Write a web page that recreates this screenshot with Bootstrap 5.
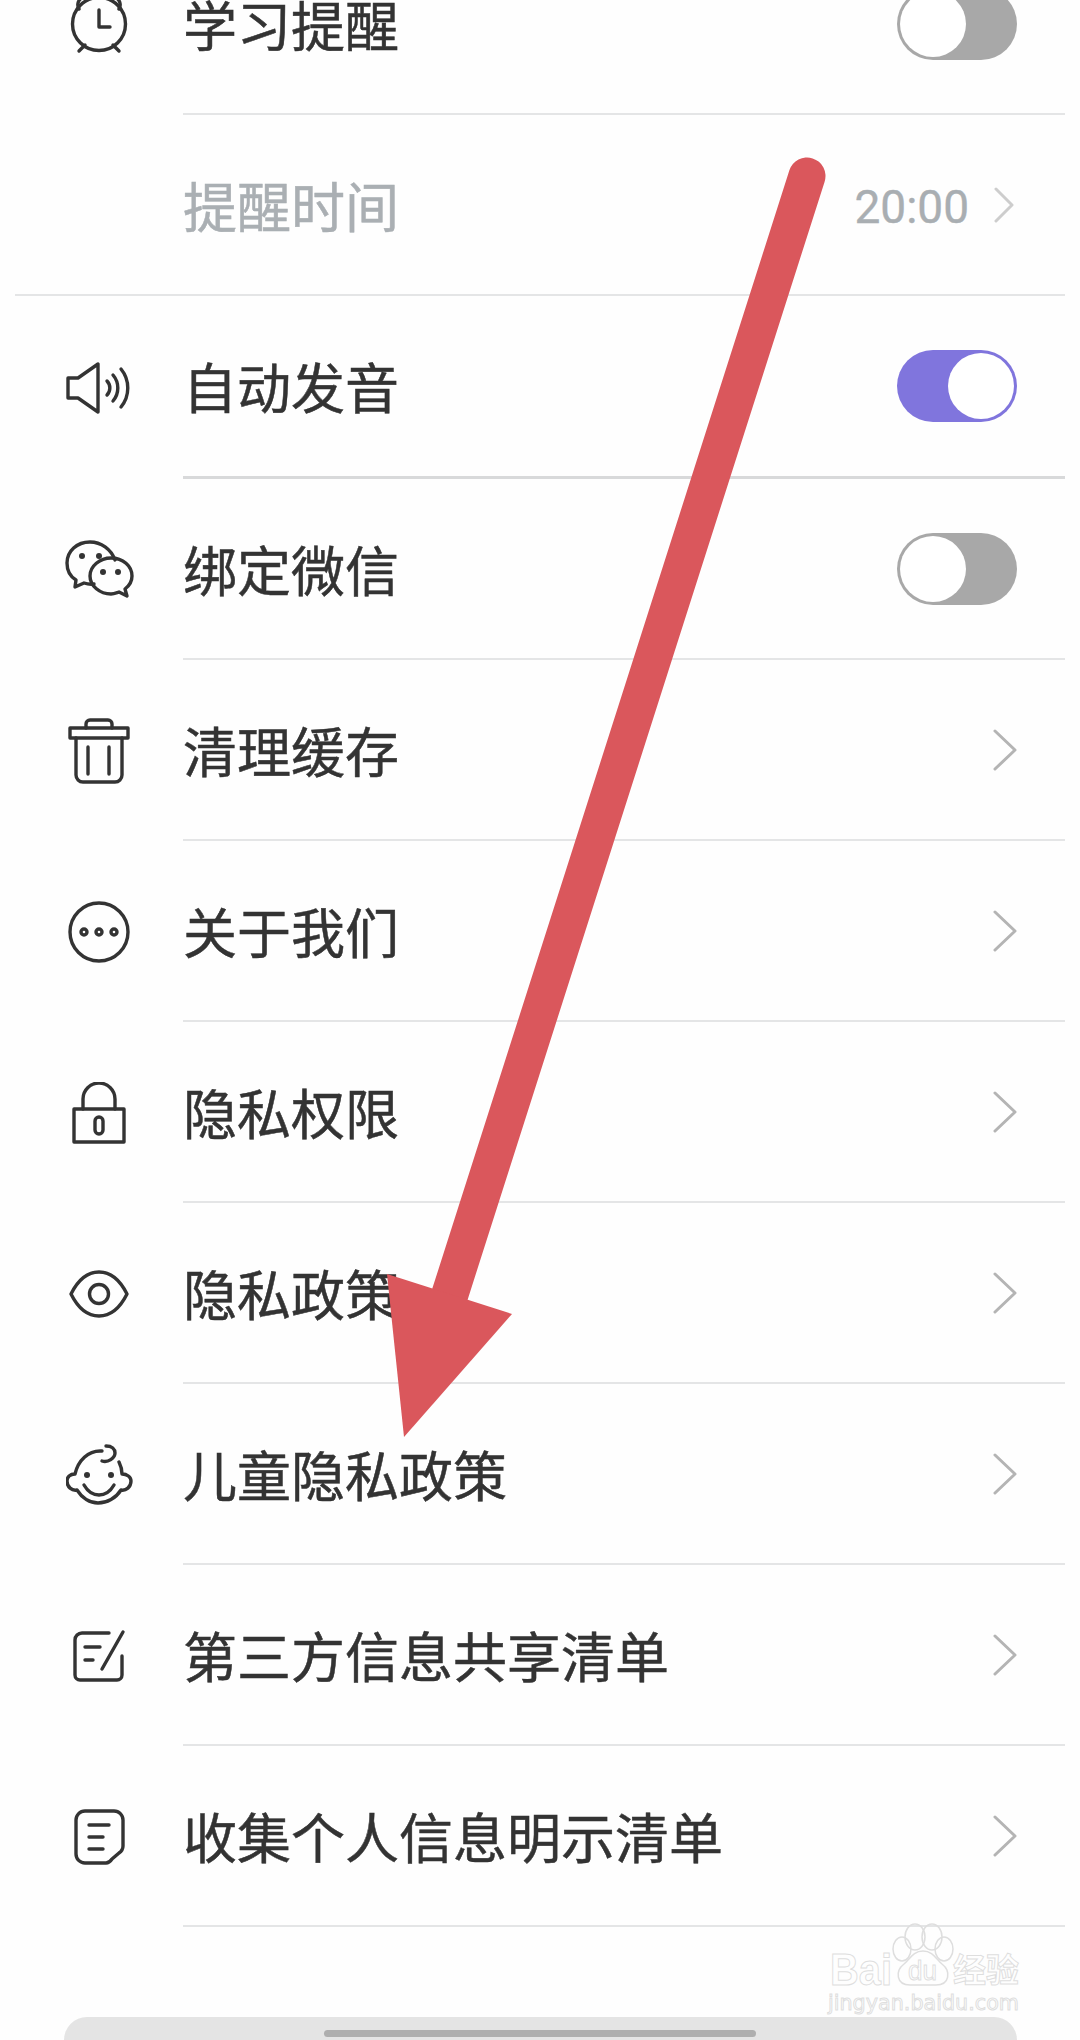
<!DOCTYPE html>
<html lang="zh-CN">

<head>
    <meta charset="UTF-8">
    <meta name="viewport" content="width=device-width, initial-scale=1.0">
    <title>设置</title>
    <link href="https://cdn.jsdelivr.net/npm/bootstrap@5.3.0/dist/css/bootstrap.min.css" rel="stylesheet">
    <style>
        body {
            background-color: #fefefe;
            font-family: "Noto Sans CJK SC", "Noto Sans", sans-serif;
        }

        .screen {
            width: 1080px;
            height: 2040px;
        }

        .set-list {
            margin-top: -66px;
        }

        .set-row {
            height: 181px;
            margin-right: 15px;
        }

        .set-row.tall {
            height: 183px;
        }

        .set-row.wide {
            margin-left: 15px;
            padding-left: 168px;
            border-bottom: 2px solid #e4e5e6;
        }

        .set-icon {
            width: 183px;
            flex: none;
            padding-left: 60px;
        }

        .set-icon svg {
            display: block;
            fill: none;
            stroke: #333;
            stroke-width: 3.4;
            stroke-linecap: round;
            stroke-linejoin: round;
        }

        .set-icon svg .dot {
            fill: #333;
            stroke: none;
        }

        .set-body {
            padding-right: 48px;
            border-bottom: 2px solid #e4e5e6;
        }

        .wide .set-body {
            border-bottom: 0;
        }

        .set-body.thick {
            border-bottom: 3px solid #d8d9da;
        }

        .set-name {
            font-size: 54px;
            line-height: 1;
            color: #333;
            -webkit-text-stroke: 0.5px #333;
        }

        .set-name.muted-name {
            color: #aaafb3;
            -webkit-text-stroke: 0.5px #aaafb3;
        }

        .set-value {
            font-family: Roboto, sans-serif;
            font-size: 46px;
            line-height: 1;
            color: #a9aeb2;
            -webkit-text-stroke: 0.4px #a9aeb2;
            margin-right: 25px;
            padding-top: 5px;
        }

        .chev {
            display: block;
            fill: none;
            stroke: #b4b4b4;
            stroke-width: 3;
            stroke-linecap: round;
            stroke-linejoin: round;
        }

        .chev.light {
            stroke: #cdcdcd;
            margin-right: 3px;
        }

        .toggle-track {
            width: 120px;
            height: 72px;
            border-radius: 36px;
            padding: 3px;
            background-color: #a8a8a8;
        }

        .toggle-track.on {
            background-color: #8075dd;
        }

        .toggle-knob {
            width: 66px;
            height: 66px;
            border-radius: 50%;
            background-color: #fff;
        }

        .pull-tab {
            position: absolute;
            left: 64px;
            top: 2017px;
            width: 953px;
            height: 23px;
            background-color: #e4e4e4;
            border-radius: 26px 26px 0 0;
        }

        .home-bar {
            position: absolute;
            left: 324px;
            top: 2030px;
            width: 432px;
            height: 7px;
            background-color: #aeaeae;
            border-radius: 4px;
        }

        .red-arrow {
            position: absolute;
            left: 0;
            top: 0;
        }

        .watermark {
            position: absolute;
            left: 826px;
            top: 1922px;
        }

        .watermark svg {
            display: block;
        }

        .watermark .paw {
            fill: none;
            stroke: #dedede;
            stroke-width: 1.5;
        }

        .watermark text {
            fill: #fefefe;
            stroke: #dedede;
            stroke-width: 1;
        }
    </style>
</head>

<body>
    <div class="screen position-relative overflow-hidden">
        <div class="set-list">

            <!-- 学习提醒 -->
            <div class="set-row d-flex">
                <div class="set-icon d-flex align-items-center">
                    <svg width="70" height="70" viewBox="0 0 70 70" style="margin-left:4px">
                        <circle cx="35" cy="34" r="26.5" />
                        <path d="M35 20v17h11M15 61l6-6M55 61l-6-6" />
                        <path d="M15 19a8 8 0 0 1 11-11M55 19a8 8 0 0 0-11-11" />
                    </svg>
                </div>
                <div class="set-body flex-grow-1 d-flex align-items-center justify-content-between">
                    <span class="set-name">学习提醒</span>
                    <div class="toggle-track"><div class="toggle-knob"></div></div>
                </div>
            </div>

            <!-- 提醒时间 -->
            <div class="set-row wide d-flex">
                <div class="set-body flex-grow-1 d-flex align-items-center justify-content-between">
                    <span class="set-name muted-name">提醒时间</span>
                    <div class="d-flex align-items-center">
                        <span class="set-value">20:00</span>
                        <svg class="chev light" width="20" height="36" viewBox="0 0 20 36"><path d="M2 2l16 16L2 34" /></svg>
                    </div>
                </div>
            </div>

            <!-- 自动发音 -->
            <div class="set-row tall d-flex">
                <div class="set-icon d-flex align-items-center">
                    <svg width="70" height="52" viewBox="0 0 70 52" style="margin-left:6px">
                        <path d="M2 16h10L32 2v48L12 36H2z" />
                        <path d="M41 19a10 10 0 0 1 0 14M47 13a20 20 0 0 1 0 26M55 7a30 30 0 0 1 0 38" />
                    </svg>
                </div>
                <div class="set-body thick flex-grow-1 d-flex align-items-center justify-content-between">
                    <span class="set-name">自动发音</span>
                    <div class="toggle-track on d-flex justify-content-end"><div class="toggle-knob"></div></div>
                </div>
            </div>

            <!-- 绑定微信 -->
            <div class="set-row d-flex">
                <div class="set-icon d-flex align-items-center">
                    <svg width="70" height="60" viewBox="0 0 70 60" style="margin-left:5px">
                        <path d="M50 20C46 9 36 2 25 2 12 2 2 11 2 23c0 8 4 14 9 17l-1 7 9-4c3 1 7 1.500 10 1" />
                        <path d="M46 18c12 0 21 8 21 18 0 6-3 10-7 13l2 7-8-4c-3 1-5 2-8 2-11 0-21-8-21-18s10-18 21-18z" />
                        <circle class="dot" cx="17" cy="16" r="3" />
                        <circle class="dot" cx="34" cy="16" r="3" />
                        <circle class="dot" cx="38" cy="32" r="3" />
                        <circle class="dot" cx="53" cy="32" r="3" />
                    </svg>
                </div>
                <div class="set-body flex-grow-1 d-flex align-items-center justify-content-between">
                    <span class="set-name">绑定微信</span>
                    <div class="toggle-track"><div class="toggle-knob"></div></div>
                </div>
            </div>

            <!-- 清理缓存 -->
            <div class="set-row d-flex">
                <div class="set-icon d-flex align-items-center">
                    <svg width="64" height="66" viewBox="0 0 64 66" style="margin-left:7px">
                        <path d="M19 10V6a4 4 0 0 1 4-4h18a4 4 0 0 1 4 4v4" />
                        <path d="M3 10h58v10H3z" />
                        <path d="M9 20v37a7 7 0 0 0 7 7h32a7 7 0 0 0 7-7V20M21 29v27M42 29v27" />
                    </svg>
                </div>
                <div class="set-body flex-grow-1 d-flex align-items-center justify-content-between">
                    <span class="set-name">清理缓存</span>
                    <svg class="chev" width="24" height="42" viewBox="0 0 24 42"><path d="M2 2l20 19L2 40" /></svg>
                </div>
            </div>

            <!-- 关于我们 -->
            <div class="set-row d-flex">
                <div class="set-icon d-flex align-items-center">
                    <svg width="62" height="62" viewBox="0 0 62 62" style="margin-left:8px">
                        <circle cx="31" cy="31" r="29" />
                        <circle cx="16" cy="31" r="3" />
                        <circle cx="31" cy="31" r="3" />
                        <circle cx="46" cy="31" r="3" />
                    </svg>
                </div>
                <div class="set-body flex-grow-1 d-flex align-items-center justify-content-between">
                    <span class="set-name">关于我们</span>
                    <svg class="chev" width="24" height="42" viewBox="0 0 24 42"><path d="M2 2l20 19L2 40" /></svg>
                </div>
            </div>

            <!-- 隐私权限 -->
            <div class="set-row d-flex">
                <div class="set-icon d-flex align-items-center">
                    <svg width="54" height="62" viewBox="0 0 54 62" style="margin-left:12px">
                        <path d="M11 27V17a16 16 0 0 1 32 0v10" />
                        <path d="M2 27h50v33H2z" />
                        <rect x="23" y="35" width="8" height="17" rx="4" />
                    </svg>
                </div>
                <div class="set-body flex-grow-1 d-flex align-items-center justify-content-between">
                    <span class="set-name">隐私权限</span>
                    <svg class="chev" width="24" height="42" viewBox="0 0 24 42"><path d="M2 2l20 19L2 40" /></svg>
                </div>
            </div>

            <!-- 隐私政策 -->
            <div class="set-row d-flex">
                <div class="set-icon d-flex align-items-center">
                    <svg width="60" height="48" viewBox="0 0 60 48" style="margin-left:9px">
                        <path d="M2 24C9 10 19 2 30 2s21 8 28 22c-7 14-17 22-28 22S9 38 2 24z" />
                        <circle cx="30" cy="24" r="9.500" />
                    </svg>
                </div>
                <div class="set-body flex-grow-1 d-flex align-items-center justify-content-between">
                    <span class="set-name">隐私政策</span>
                    <svg class="chev" width="24" height="42" viewBox="0 0 24 42"><path d="M2 2l20 19L2 40" /></svg>
                </div>
            </div>

            <!-- 儿童隐私政策 -->
            <div class="set-row d-flex">
                <div class="set-icon d-flex align-items-center">
                    <svg width="68" height="62" viewBox="0 0 68 62" style="margin-left:6px">
                        <path d="M36 7C22 6 12 17 9 30 4 30 1 33 1 37c0 6 5 10 10 9 5 8 13 13 21 13 9 0 18-5 23-13 5 1 10-3 10-9 0-4-4-7-9-7 0-4-1-8-3-12" />
                        <path d="M40 2c6 0 9 3 9 7 0 5-7 10-13 8" />
                        <circle class="dot" cx="21" cy="31" r="3" />
                        <circle class="dot" cx="45" cy="31" r="3" />
                        <path d="M18 41c4 7 9 10 15 10s11-3 15-10" />
                    </svg>
                </div>
                <div class="set-body flex-grow-1 d-flex align-items-center justify-content-between">
                    <span class="set-name">儿童隐私政策</span>
                    <svg class="chev" width="24" height="42" viewBox="0 0 24 42"><path d="M2 2l20 19L2 40" /></svg>
                </div>
            </div>

            <!-- 第三方信息共享清单 -->
            <div class="set-row d-flex">
                <div class="set-icon d-flex align-items-center">
                    <svg width="54" height="54" viewBox="0 0 54 54" style="margin-left:13px">
                        <path d="M36 4H9a7 7 0 0 0-7 7v35a5 5 0 0 0 5 5h37a5 5 0 0 0 5-5V27" />
                        <path d="M50 3L29 40M12 18h15M12 31h8" />
                    </svg>
                </div>
                <div class="set-body flex-grow-1 d-flex align-items-center justify-content-between">
                    <span class="set-name">第三方信息共享清单</span>
                    <svg class="chev" width="24" height="42" viewBox="0 0 24 42"><path d="M2 2l20 19L2 40" /></svg>
                </div>
            </div>

            <!-- 收集个人信息明示清单 -->
            <div class="set-row d-flex">
                <div class="set-icon d-flex align-items-center">
                    <svg width="52" height="56" viewBox="0 0 52 56" style="margin-left:14px">
                        <path d="M11 2h29a9 9 0 0 1 9 9v26c0 3-1 5-4 7l-7 6c-2 3-4 4-6 4H11a9 9 0 0 1-9-9V11a9 9 0 0 1 9-9z" />
                        <path d="M15 16h20M15 28h14M15 40h14" />
                    </svg>
                </div>
                <div class="set-body flex-grow-1 d-flex align-items-center justify-content-between">
                    <span class="set-name">收集个人信息明示清单</span>
                    <svg class="chev" width="24" height="42" viewBox="0 0 24 42"><path d="M2 2l20 19L2 40" /></svg>
                </div>
            </div>

        </div>

        <div class="pull-tab"></div>
        <div class="home-bar"></div>

        <!-- baidu watermark -->
        <div class="watermark">
            <svg width="200" height="96" viewBox="0 0 200 96">
                <ellipse class="paw" cx="89" cy="15" rx="10" ry="13" />
                <ellipse class="paw" cx="106" cy="15" rx="10" ry="13" />
                <ellipse class="paw" cx="76" cy="27" rx="9" ry="12" />
                <ellipse class="paw" cx="118" cy="27" rx="9" ry="12" />
                <path class="paw" d="M97 29c-10 0-13 8-19 13-9 7-8 21 6 21h26c14 0 15-14 6-21-6-5-9-13-19-13z" />
                <text x="4" y="63" font-family="Liberation Sans, sans-serif" font-size="44" font-weight="700" textLength="62" lengthAdjust="spacingAndGlyphs">Bai</text>
                <text x="82" y="58" font-family="Liberation Sans, sans-serif" font-size="28" textLength="29" lengthAdjust="spacingAndGlyphs">du</text>
                <text x="127" y="60" font-family="Noto Sans CJK SC, sans-serif" font-size="33" font-weight="700">经验</text>
                <text x="2" y="88" font-family="DejaVu Sans, sans-serif" font-size="21" textLength="191" lengthAdjust="spacingAndGlyphs">jingyan.baidu.com</text>
            </svg>
        </div>

        <!-- red annotation arrow -->
        <svg class="red-arrow" width="1080" height="2040" viewBox="0 0 1080 2040">
            <path d="M807 176L450 1294" fill="none" stroke="#da575c" stroke-width="37" stroke-linecap="round" />
            <path d="M387 1274L512 1314L404 1437z" fill="#da575c" />
        </svg>
    </div>

    <script src="https://cdn.jsdelivr.net/npm/bootstrap@5.3.0/dist/js/bootstrap.bundle.min.js"></script>
</body>

</html>
